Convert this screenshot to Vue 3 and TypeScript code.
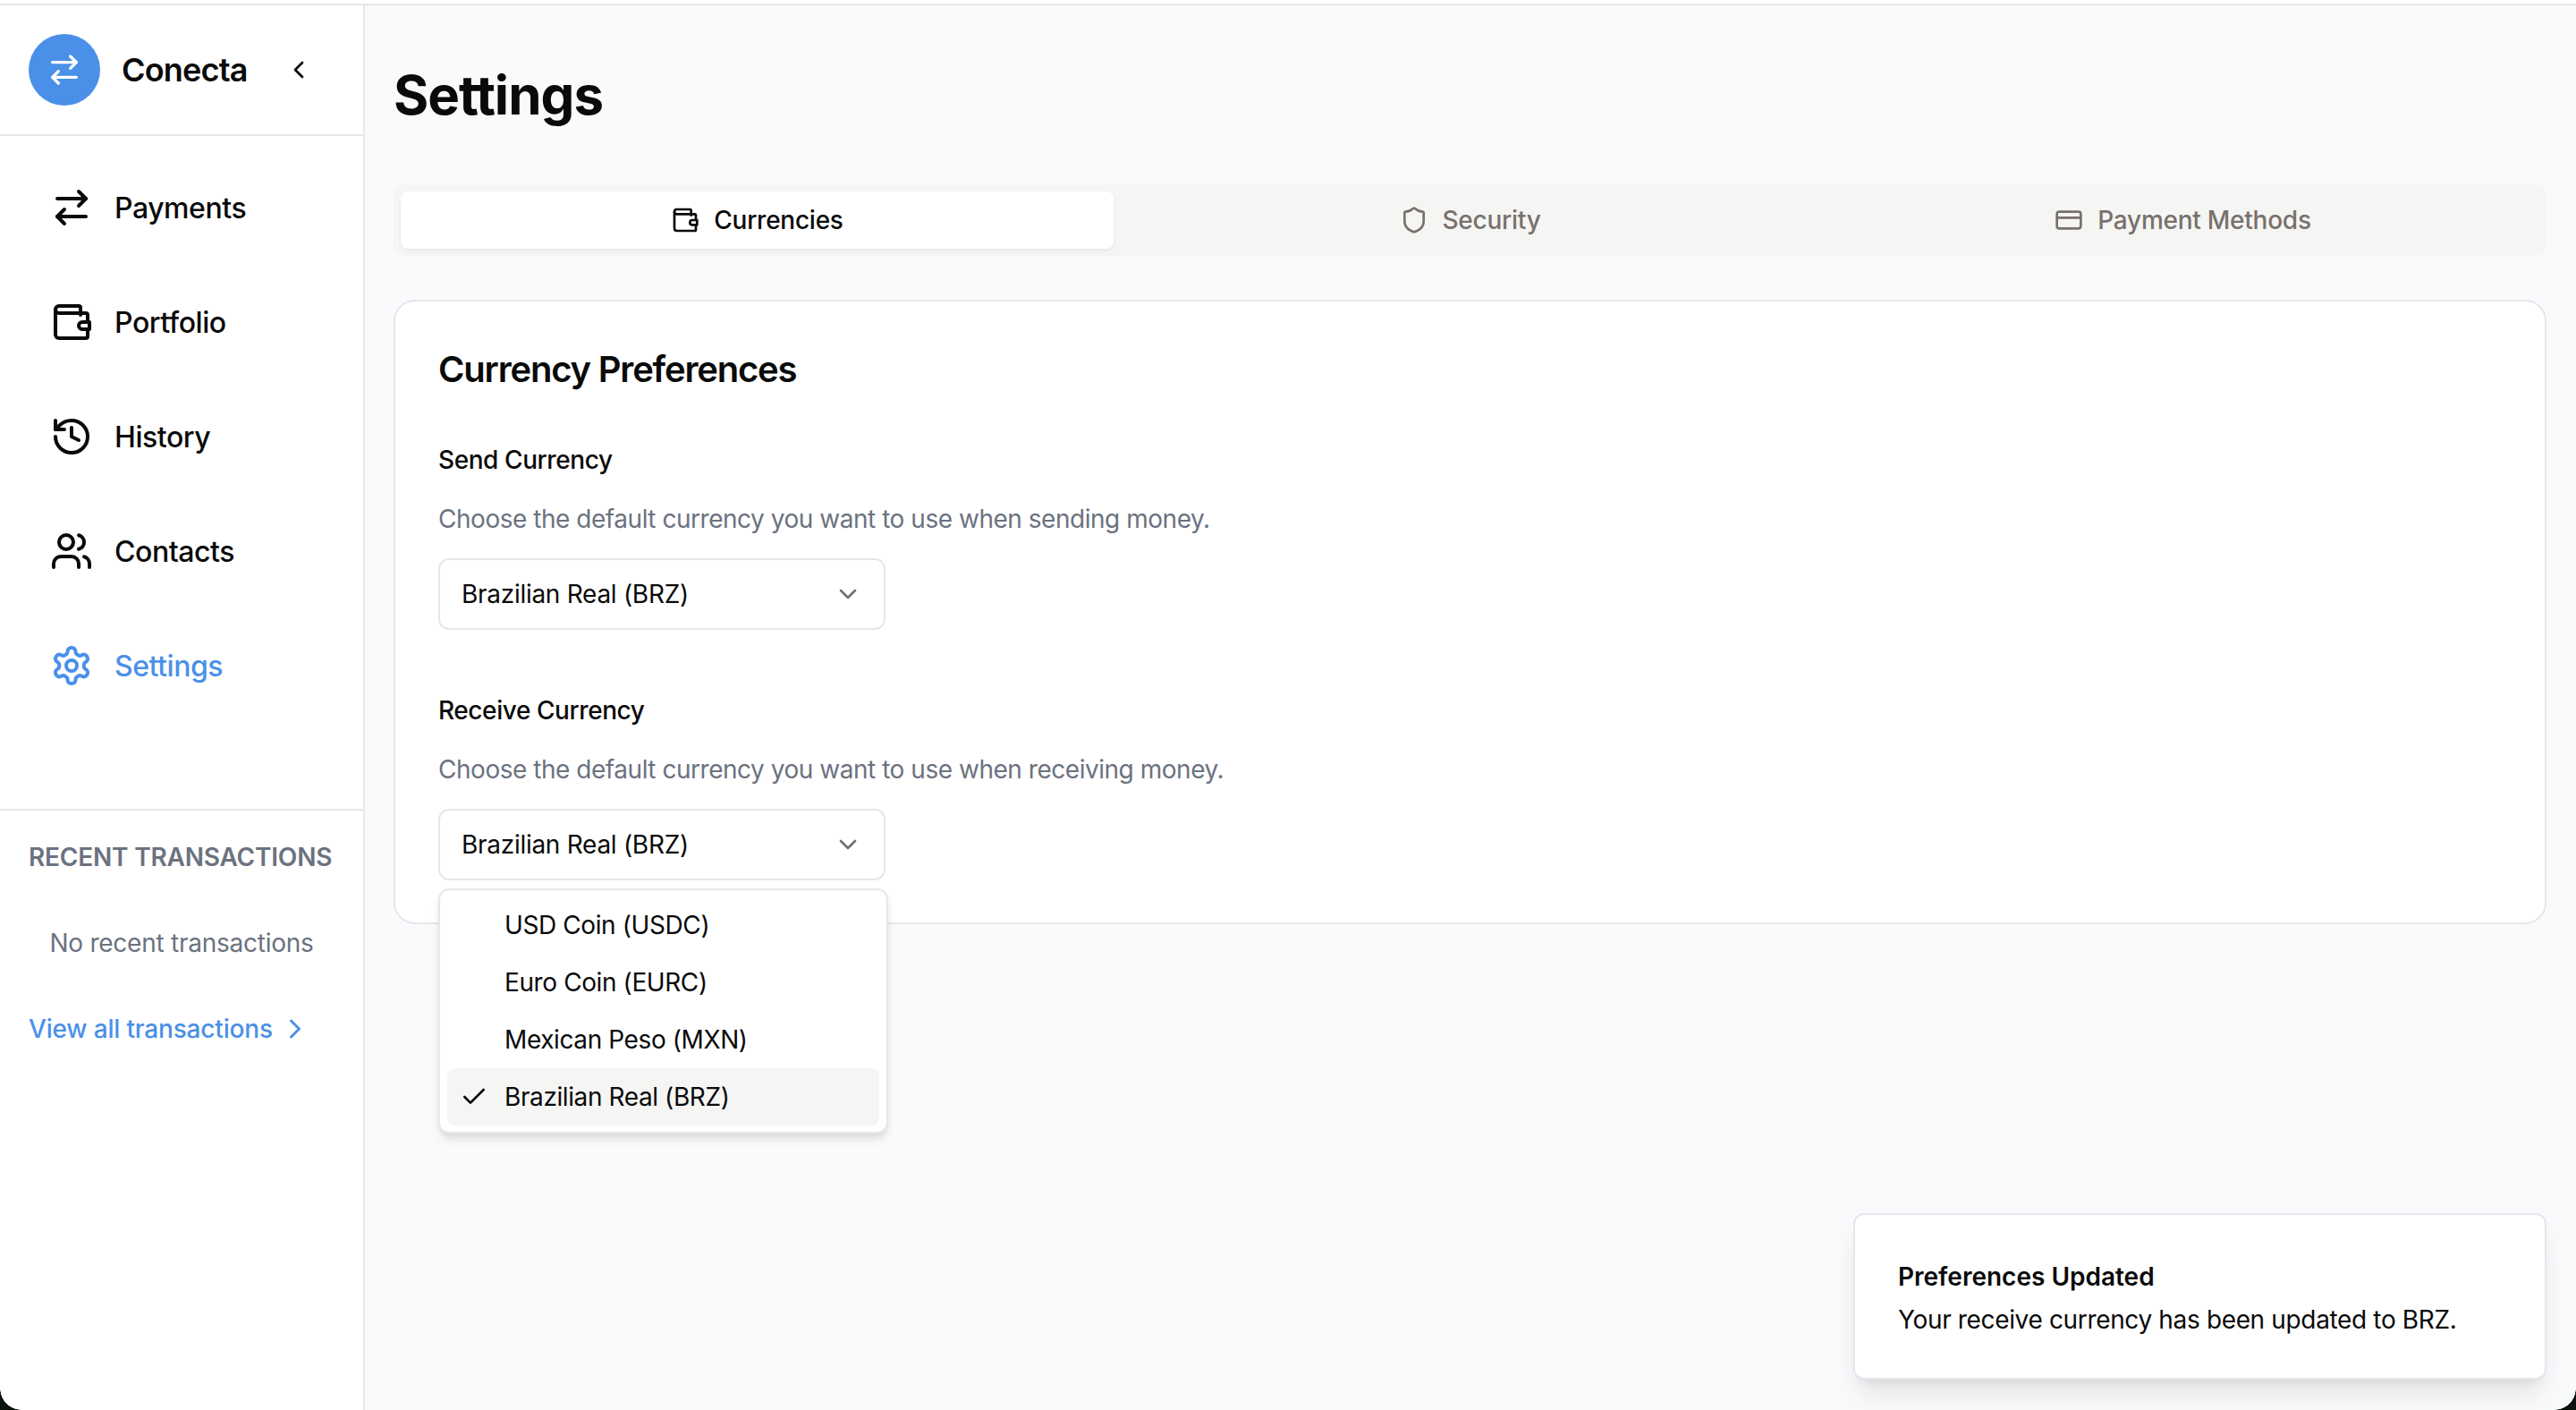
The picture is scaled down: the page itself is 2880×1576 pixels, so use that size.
<script setup lang="ts">
const navItems = [
  { label: 'Payments', icon: 'swap' },
  { label: 'Portfolio', icon: 'wallet' },
  { label: 'History', icon: 'history' },
  { label: 'Contacts', icon: 'users' },
  { label: 'Settings', icon: 'gear', active: true },
]

const tabs = [
  { label: 'Currencies', icon: 'wallet', active: true },
  { label: 'Security', icon: 'shield' },
  { label: 'Payment Methods', icon: 'card' },
]

const options = ['USD Coin (USDC)', 'Euro Coin (EURC)', 'Mexican Peso (MXN)', 'Brazilian Real (BRZ)']
</script>

<template>
  <div class="page">
    <div class="shell">
      <aside class="sidebar">
        <div class="brand">
          <div class="brand__logo">
            <svg class="icon-logo" viewBox="0 0 24 24" fill="none" stroke="currentColor" stroke-width="2" stroke-linecap="round" stroke-linejoin="round">
              <path d="m16 3 4 4-4 4" />
              <path d="M20 7H4" />
              <path d="m8 21-4-4 4-4" />
              <path d="M4 17h16" />
            </svg>
          </div>
          <span class="brand__name">Conecta</span>
          <svg class="brand__toggle" viewBox="0 0 24 24" fill="none" stroke="currentColor" stroke-width="2" stroke-linecap="round" stroke-linejoin="round">
            <path d="m15 18-6-6 6-6" />
          </svg>
        </div>

        <nav class="nav">
          <a v-for="item in navItems" :key="item.label" :class="['nav__item', { 'nav__item--active': item.active }]">
            <svg class="nav__icon" viewBox="0 0 24 24" fill="none" stroke="currentColor" stroke-width="2" stroke-linecap="round" stroke-linejoin="round">
              <template v-if="item.icon === 'swap'">
                <path d="m16 3 4 4-4 4" />
                <path d="M20 7H4" />
                <path d="m8 21-4-4 4-4" />
                <path d="M4 17h16" />
              </template>
              <template v-else-if="item.icon === 'wallet'">
                <path d="M17 8V4a1 1 0 0 0-1-1H5a2 2 0 0 0 0 4h15a1 1 0 0 1 1 1v4" />
                <path d="M3 5v14a2 2 0 0 0 2 2h15a1 1 0 0 0 1-1v-4" />
                <path d="M18 12a2 2 0 0 0 0 4h4v-4Z" />
              </template>
              <template v-else-if="item.icon === 'history'">
                <path d="M3 12a9 9 0 1 0 9-9 9.75 9.75 0 0 0-6.74 2.74L3 8" />
                <path d="M3 3v5h5" />
                <path d="M12 7v5l4 2" />
              </template>
              <template v-else-if="item.icon === 'users'">
                <path d="M16 21v-2a4 4 0 0 0-4-4H6a4 4 0 0 0-4 4v2" />
                <circle cx="9" cy="7" r="4" />
                <path d="M22 21v-2a4 4 0 0 0-3-3.87" />
                <path d="M16 3.13a4 4 0 0 1 0 7.75" />
              </template>
              <template v-else>
                <path d="M12.22 2h-.44a2 2 0 0 0-2 2v.18a2 2 0 0 1-1 1.73l-.43.25a2 2 0 0 1-2 0l-.15-.08a2 2 0 0 0-2.73.73l-.22.38a2 2 0 0 0 .73 2.73l.15.1a2 2 0 0 1 1 1.72v.51a2 2 0 0 1-1 1.74l-.15.09a2 2 0 0 0-.73 2.73l.22.38a2 2 0 0 0 2.73.73l.15-.08a2 2 0 0 1 2 0l.43.25a2 2 0 0 1 1 1.73V20a2 2 0 0 0 2 2h.44a2 2 0 0 0 2-2v-.18a2 2 0 0 1 1-1.73l.43-.25a2 2 0 0 1 2 0l.15.08a2 2 0 0 0 2.73-.73l.22-.39a2 2 0 0 0-.73-2.73l-.15-.08a2 2 0 0 1-1-1.74v-.5a2 2 0 0 1 1-1.74l.15-.09a2 2 0 0 0 .73-2.73l-.22-.38a2 2 0 0 0-2.73-.73l-.15.08a2 2 0 0 1-2 0l-.43-.25a2 2 0 0 1-1-1.73V4a2 2 0 0 0-2-2z" />
                <circle cx="12" cy="12" r="3" />
              </template>
            </svg>
            <span>{{ item.label }}</span>
          </a>
        </nav>

        <section class="recent">
          <h3 class="recent__title">RECENT TRANSACTIONS</h3>
          <p class="recent__empty">No recent transactions</p>
          <a class="recent__link">
            <span>View all transactions</span>
            <svg class="recent__chevron" viewBox="0 0 24 24" fill="none" stroke="currentColor" stroke-width="2" stroke-linecap="round" stroke-linejoin="round">
              <path d="m9 18 6-6-6-6" />
            </svg>
          </a>
        </section>
      </aside>

      <main class="main">
        <h1 class="main__title">Settings</h1>

        <div class="tabs">
          <button v-for="tab in tabs" :key="tab.label" :class="['tab', { 'tab--active': tab.active }]">
            <svg class="tab__icon" viewBox="0 0 24 24" fill="none" stroke="currentColor" stroke-width="2" stroke-linecap="round" stroke-linejoin="round">
              <template v-if="tab.icon === 'wallet'">
                <path d="M17 8V4a1 1 0 0 0-1-1H5a2 2 0 0 0 0 4h15a1 1 0 0 1 1 1v4" />
                <path d="M3 5v14a2 2 0 0 0 2 2h15a1 1 0 0 0 1-1v-4" />
                <path d="M18 12a2 2 0 0 0 0 4h4v-4Z" />
              </template>
              <template v-else-if="tab.icon === 'shield'">
                <path d="M20 13c0 5-3.5 7.5-7.66 8.95a1 1 0 0 1-.67-.01C7.5 20.5 4 18 4 13V6a1 1 0 0 1 1-1c2 0 4.5-1.2 6.24-2.72a1.17 1.17 0 0 1 1.52 0C14.51 3.81 17 5 19 5a1 1 0 0 1 1 1z" />
              </template>
              <template v-else>
                <rect width="20" height="14" x="2" y="5" rx="2" />
                <path d="M2 10h20" />
              </template>
            </svg>
            <span>{{ tab.label }}</span>
          </button>
        </div>

        <section class="card">
          <h2 class="card__title">Currency Preferences</h2>

          <div class="field">
            <label class="field__label">Send Currency</label>
            <p class="field__hint">Choose the default currency you want to use when sending money.</p>
            <div class="select">
              <span>Brazilian Real (BRZ)</span>
              <svg class="select__chevron" viewBox="0 0 24 24" fill="none" stroke="currentColor" stroke-width="2" stroke-linecap="round" stroke-linejoin="round">
                <path d="m6 9 6 6 6-6" />
              </svg>
            </div>
          </div>

          <div class="field field--last">
            <label class="field__label">Receive Currency</label>
            <p class="field__hint">Choose the default currency you want to use when receiving money.</p>
            <div class="select">
              <span>Brazilian Real (BRZ)</span>
              <svg class="select__chevron" viewBox="0 0 24 24" fill="none" stroke="currentColor" stroke-width="2" stroke-linecap="round" stroke-linejoin="round">
                <path d="m6 9 6 6 6-6" />
              </svg>
              <ul class="menu">
                <li v-for="opt in options" :key="opt" :class="['menu__item', { 'menu__item--selected': opt === 'Brazilian Real (BRZ)' }]">
                  <svg v-if="opt === 'Brazilian Real (BRZ)'" class="menu__check" viewBox="0 0 24 24" fill="none" stroke="currentColor" stroke-width="2" stroke-linecap="round" stroke-linejoin="round">
                    <path d="M20 6 9 17l-5-5" />
                  </svg>
                  <span>{{ opt }}</span>
                </li>
              </ul>
            </div>
          </div>
        </section>
      </main>
    </div>

    <div class="toast">
      <div class="toast__title">Preferences Updated</div>
      <div class="toast__text">Your receive currency has been updated to BRZ.</div>
    </div>

    <div class="corner corner--left"></div>
    <div class="corner corner--right"></div>
  </div>
</template>

<style scoped>
.page {
  position: relative;
  width: 2880px;
  height: 1576px;
  overflow: hidden;
  box-sizing: border-box;
  padding-top: 4px;
  background: #fff;
  font-family: Inter, "Noto Sans", sans-serif;
  color: #0a0a0a;
}

.shell {
  display: flex;
  height: 1572px;
  box-sizing: border-box;
  border-top: 2px solid #e5e7eb;
  background: #f9fafb;
}

.sidebar {
  display: flex;
  flex-direction: column;
  width: 408px;
  flex-shrink: 0;
  box-sizing: border-box;
  background: #fff;
  border-right: 2px solid #e5e7eb;
}

.brand {
  display: flex;
  align-items: center;
  height: 146px;
  box-sizing: border-box;
  padding: 0 32px;
  border-bottom: 2px solid #e5e7eb;
}

.brand__logo {
  display: flex;
  align-items: center;
  justify-content: center;
  width: 80px;
  height: 80px;
  border-radius: 50%;
  background: #4a90e8;
  color: #fff;
}

.icon-logo {
  width: 40px;
  height: 40px;
}

.brand__name {
  margin-left: 24px;
  font-size: 36px;
  font-weight: 600;
  letter-spacing: -0.8px;
}

.brand__toggle {
  width: 32px;
  height: 32px;
  margin-left: 41px;
}

.nav {
  display: flex;
  flex-direction: column;
  gap: 32px;
  height: 754px;
  box-sizing: border-box;
  padding: 32px 24px 0;
  border-bottom: 2px solid #e5e7eb;
}

.nav__item {
  display: flex;
  align-items: center;
  gap: 24px;
  height: 96px;
  flex-shrink: 0;
  padding: 0 32px;
  font-size: 32px;
  font-weight: 500;
  letter-spacing: -0.45px;
}

.nav__item--active {
  color: #4a90e8;
}

.nav__icon {
  width: 48px;
  height: 48px;
  flex-shrink: 0;
}

.recent {
  padding: 0 32px;
}

.recent__title {
  margin: 32px 0 0;
  font-size: 28px;
  line-height: 40px;
  font-weight: 600;
  letter-spacing: -0.2px;
  white-space: nowrap;
  color: #6b7280;
}

.recent__empty {
  margin: 56px 0 0;
  font-size: 28px;
  line-height: 40px;
  letter-spacing: -0.25px;
  text-align: center;
  color: #6b7280;
}

.recent__link {
  display: flex;
  align-items: center;
  gap: 7px;
  margin-top: 56px;
  font-size: 28px;
  line-height: 40px;
  font-weight: 500;
  letter-spacing: -0.18px;
  color: #4a90e8;
}

.recent__chevron {
  width: 36px;
  height: 36px;
}

.main {
  flex: 1;
  min-width: 0;
  box-sizing: border-box;
  padding: 0 33px 0 32px;
}

.main__title {
  margin: 68px 0 0;
  font-size: 60px;
  line-height: 64px;
  font-weight: 700;
  letter-spacing: -1px;
}

.tabs {
  display: grid;
  grid-template-columns: repeat(3, 1fr);
  margin-top: 68px;
  height: 80px;
  box-sizing: border-box;
  padding: 8px;
  border-radius: 12px;
  background: #f5f5f4;
}

.tab {
  display: flex;
  align-items: center;
  justify-content: center;
  gap: 16px;
  border: none;
  border-radius: 8px;
  background: transparent;
  padding: 0;
  font-family: inherit;
  font-size: 28px;
  font-weight: 500;
  letter-spacing: -0.25px;
  color: #78716c;
}

.tab--active {
  background: #fff;
  color: #0a0a0a;
  box-shadow: 0 2px 4px rgba(0, 0, 0, 0.06);
}

.tab__icon {
  width: 32px;
  height: 32px;
}

.card {
  position: relative;
  margin-top: 49px;
  height: 698px;
  box-sizing: border-box;
  padding: 48px;
  background: #fff;
  border: 2px solid #e5e7eb;
  border-radius: 24px;
}

.card__title {
  margin: 0;
  font-size: 40px;
  line-height: 56px;
  font-weight: 600;
  letter-spacing: -1.2px;
}

.field {
  margin-top: 53px;
}

.field--last {
  margin-top: 70px;
}

.field__label {
  display: block;
  font-size: 28px;
  line-height: 40px;
  font-weight: 500;
  letter-spacing: -0.42px;
}

.field__hint {
  margin: 26px 0 0;
  font-size: 28px;
  line-height: 40px;
  letter-spacing: -0.47px;
  color: #6b7280;
}

.select {
  position: relative;
  display: flex;
  align-items: center;
  justify-content: space-between;
  width: 500px;
  height: 80px;
  margin-top: 24px;
  box-sizing: border-box;
  padding: 0 24px;
  background: #fff;
  border: 2px solid #e5e7eb;
  border-radius: 12px;
  font-size: 28px;
  letter-spacing: -0.28px;
}

.select__chevron {
  width: 32px;
  height: 32px;
  color: #78716c;
}

.menu {
  position: absolute;
  top: 87px;
  left: -2px;
  width: 503px;
  margin: 0;
  box-sizing: border-box;
  padding: 7px 8px;
  list-style: none;
  background: #fff;
  border: 2px solid #e5e7eb;
  border-radius: 12px;
  box-shadow: 0 8px 12px -2px rgba(0, 0, 0, 0.1), 0 4px 8px -4px rgba(0, 0, 0, 0.1);
  letter-spacing: -0.4px;
  z-index: 2;
}

.menu__item {
  position: relative;
  display: flex;
  align-items: center;
  height: 64px;
  padding-left: 64px;
  border-radius: 8px;
}

.menu__item--selected {
  background: #f5f5f4;
}

.menu__check {
  position: absolute;
  left: 14px;
  width: 32px;
  height: 32px;
}

.toast {
  position: absolute;
  right: 33px;
  bottom: 34px;
  width: 775px;
  height: 186px;
  box-sizing: border-box;
  padding: 49px 48px 0;
  background: #fff;
  border: 2px solid #e5e7eb;
  border-radius: 12px;
  box-shadow: 0 20px 30px -6px rgba(0, 0, 0, 0.1), 0 8px 12px -8px rgba(0, 0, 0, 0.1);
  font-size: 28px;
  line-height: 40px;
}

.toast__title {
  font-weight: 600;
}

.toast__text {
  margin-top: 8px;
  letter-spacing: -0.35px;
}

.corner {
  position: absolute;
  bottom: 0;
  width: 24px;
  height: 24px;
}

.corner--left {
  left: 0;
  background: radial-gradient(circle at 100% 0, transparent 23.5px, #0a140c 24px);
}

.corner--right {
  right: 0;
  background: radial-gradient(circle at 0 0, transparent 23.5px, #0a140c 24px);
}
</style>

<style>
html, body {
  margin: 0;
  background: #fff;
}
</style>
